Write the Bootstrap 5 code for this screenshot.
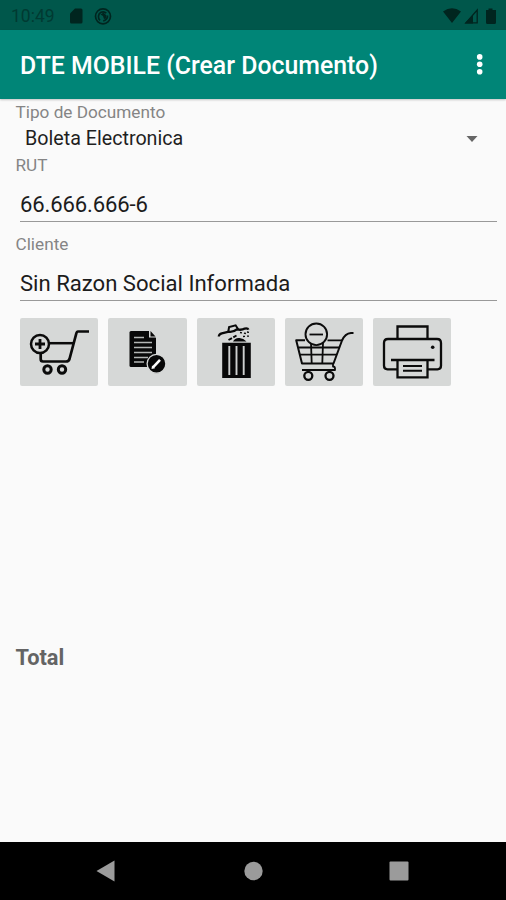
<!DOCTYPE html>
<html lang="es">
<head>
<meta charset="utf-8">
<meta name="viewport" content="width=device-width, initial-scale=1">
<title>DTE MOBILE</title>
<link rel="stylesheet" href="https://cdn.jsdelivr.net/npm/bootstrap@5.3.0/dist/css/bootstrap.min.css">
<style>
body{font-family:Roboto,"Liberation Sans",sans-serif;background:#fafafa;height:900px;overflow:hidden}
svg{display:block;flex:none}
.status{height:30px;background:#00574b;color:#003a32;padding:2px 8px 0 11px}
.clock{font-size:17.5px;line-height:28px;width:56px;white-space:nowrap}
.appbar{height:68.5px;background:#008577;padding:0 0 0 20px;box-shadow:0 1px 2px rgba(0,0,0,.22)}
.title{font-size:24.85px;line-height:30px;font-weight:500;white-space:nowrap;padding-top:3px}
.form-area{padding:3.5px 9px 0 15.5px}
.lbl{font-size:17.2px;line-height:20px;color:#858585;font-weight:400;margin:0;display:block}
.lbl-next{margin-top:11.5px}
.spin{font-size:19.7px;line-height:24px;color:#1f1f1f;padding:0 19px 0 9.5px;margin:5px 0 4px}
.field{font-size:22.1px;line-height:26px;color:#1c1c1c;height:31px;margin:16px 0 0 4.5px;border-bottom:1.5px solid #999}
.rut{letter-spacing:-.15px}
.tools{gap:10px;margin:17px 0 0 4.5px}
.tool{width:78.3px;height:68px;background:#d6d8d7;border:0;border-radius:2px;padding:0}
.total{font-size:21.8px;line-height:26px;font-weight:700;color:#646464;margin-top:259px}
.sys{height:58px;background:#000}
</style>
<script src="https://cdn.jsdelivr.net/npm/bootstrap@5.3.0/dist/js/bootstrap.bundle.min.js"></script>
</head>
<body class="d-flex flex-column">
<div class="status d-flex align-items-center flex-shrink-0">
  <span class="clock">10:49</span>
  <svg width="50" height="20" viewBox="67 5 50 20"><path fill="#00251f" d="M75 7.500h6q1.500 0 1.500 1.500v12q0 1.500-1.500 1.500h-9.500q-1.500 0-1.500-1.500V12.500z"/><g fill="none" stroke="#00251f" stroke-width="1.700"><circle cx="103" cy="15.300" r="7.500"/><path d="M100 19.300a5 5 0 0 1 1-8q3-1.300 5.300.8M107.500 14.500a4.800 4.800 0 0 1-4.300 5.300"/></g><path fill="#00251f" d="M100.500 13.500l3-2 3 3-.5 3-2 .5-1-3z"/></svg>
  <svg class="ms-auto" width="58" height="20" viewBox="441 5 58 20"><path fill="#00251f" d="M444 10.500Q453 4 462 10.500L453 22zM487 9h2.500V7.500h4V9H497v12.500q0 1.500-1.500 1.500h-7q-1.500 0-1.500-1.500z"/><path fill="none" stroke="#00251f" stroke-width="1.300" d="M467 21.800h11.200V9z"/><path fill="#00251f" d="M465.500 22.500l8.500-8.500v8.500z"/></svg>
</div>
<header class="appbar d-flex align-items-center flex-shrink-0">
  <h1 class="title text-white m-0">DTE MOBILE (Crear Documento)</h1>
  <svg class="ms-auto me-3" width="20" height="26" viewBox="0 0 20 26" fill="#fff"><circle cx="9.700" cy="5.900" r="2.800"/><circle cx="9.700" cy="13.300" r="2.800"/><circle cx="9.700" cy="20.700" r="2.800"/></svg>
</header>
<main class="form-area flex-grow-1 d-flex flex-column">
  <span class="lbl">Tipo de Documento</span>
  <div class="spin d-flex align-items-center"><span>Boleta Electronica</span><svg class="ms-auto" width="12" height="8" viewBox="0 0 12 8"><path fill="#666" d="M.5 1h11L6 7z"/></svg></div>
  <span class="lbl">RUT</span>
  <div class="field rut">66.666.666-6</div>
  <span class="lbl lbl-next">Cliente</span>
  <div class="field">Sin Razon Social Informada</div>
  <div class="tools d-flex">
    <button class="tool" aria-label="Agregar"><svg width="78" height="68" viewBox="0 0 78 68" fill="none" stroke="#0b0b0b"><circle cx="20" cy="26" r="9" stroke-width="2.500"/><path stroke-width="2.800" d="M20 21v10M15 26h10"/><path stroke-width="2.700" stroke-linejoin="round" d="M69 13.500H58q-1.200 0-1.700 2L49.500 41q-.8 2.500-3.500 2.500H23q-2.300 0-2.300-2.500v-6"/><path stroke-width="2.500" d="M29 25.200h24"/><g stroke-width="3"><circle cx="27.500" cy="51.500" r="3.700"/><circle cx="42" cy="51.500" r="3.700"/></g></svg></button>
    <button class="tool" aria-label="Editar"><svg width="78" height="68" viewBox="0 0 78 68"><path fill="#080808" d="M23 13h18.500l6.500 6.500V49H23q-1.500 0-1.500-1.500v-33Q21.500 13 23 13z"/><path fill="#d6d8d7" d="M41 12.500h1.500L48 18v1.500h-7z"/><path fill="#080808" d="M42.500 13l5 5.500h-5z"/><path stroke="#b4b6b5" stroke-width="1.700" d="M26 19.500h10M26 24.500h18M26 29.500h18M26 34.500h18M26 39.500h14M26 44h10"/><circle cx="48.500" cy="45.800" r="9.400" fill="#080808" stroke="#d6d8d7" stroke-width="1.300"/><path stroke="#fff" stroke-width="2.600" d="M45 49.300l7-7.500"/><path fill="#fff" d="M43.500 51l.5-3.500 3 2.700z"/></svg></button>
    <button class="tool" aria-label="Eliminar"><svg width="78" height="68" viewBox="0 0 78 68"><path fill="#080808" d="M25.200 24.700h28.600V60H25.200z"/><path stroke="#cdcfce" stroke-width="1.900" d="M32.300 28v29M39.500 28v29M46.700 28v29"/><g fill="none" stroke="#080808"><path stroke-width="2.300" d="M21.800 18.500q.2-2.500 3-3.200l7-1.600q5 .5 8-2.300 5 1 8-.8 3-.6 3.700 1"/><path stroke-width="2" d="M31.300 13.500l.8-4.500 6.500-1.700 2.600 4"/><path stroke-width="2" stroke-dasharray="4 1.500" d="M31.500 22l8-4.500"/><path stroke-width="1.300" stroke-dasharray="2 2" d="M43 14.500l6 1M46 18.500l7-.5M50 14l3 .5"/></g><path fill="#080808" d="M36 23.500q2-4 6.500-3.500 4 .3 7 3.500z"/></svg></button>
    <button class="tool" aria-label="Quitar"><svg width="78" height="68" viewBox="0 0 78 68" fill="none" stroke="#0b0b0b" stroke-width="1.800" stroke-linejoin="round"><circle cx="31.300" cy="16.300" r="10.800" stroke-width="1.900"/><path d="M24.500 16.500h13.500"/><path stroke-width="2" d="M20 22.300h-8.800L17 45.500h31.500L57 22.500q3-7 9-7.500h2.500"/><path d="M42.500 22.300H57M13.500 29.500h41M15 36.700h36.500M26 25l.7 20M38 25l-.7 20M48 45.500v3q2 0 2 2v1.500H17"/><g stroke-width="2.300"><circle cx="23.300" cy="57.800" r="4"/><circle cx="44.500" cy="57.800" r="4"/></g></svg></button>
    <button class="tool" aria-label="Imprimir"><svg width="78" height="68" viewBox="0 0 78 68" fill="none" stroke="#0b0b0b" stroke-width="2.300"><path d="M24.500 21V8.500h30V21"/><path d="M24 51.300H14.500q-3.500 0-3.500-3.500V25q0-4 4-4h49q4 0 4 4v22.800q0 3.500-3.500 3.500H55"/><path d="M18 42h43.500M24.500 42v17.300h30V42"/><path stroke-width="2.100" d="M30 48h19M30 52.800h19"/><circle cx="59.700" cy="29.300" r="1.800" fill="#0b0b0b" stroke="none"/></svg></button>
  </div>
  <div class="total">Total</div>
</main>
<nav class="sys d-flex flex-shrink-0" aria-label="Sistema">
  <svg width="506" height="58" viewBox="0 842 506 58" fill="#9b9b9b"><path d="M96.500 871l18-10.500v21z"/><circle cx="253.500" cy="871" r="9.200"/><rect x="389.500" y="861.500" width="19" height="19" rx="1"/></svg>
</nav>
</body>
</html>
